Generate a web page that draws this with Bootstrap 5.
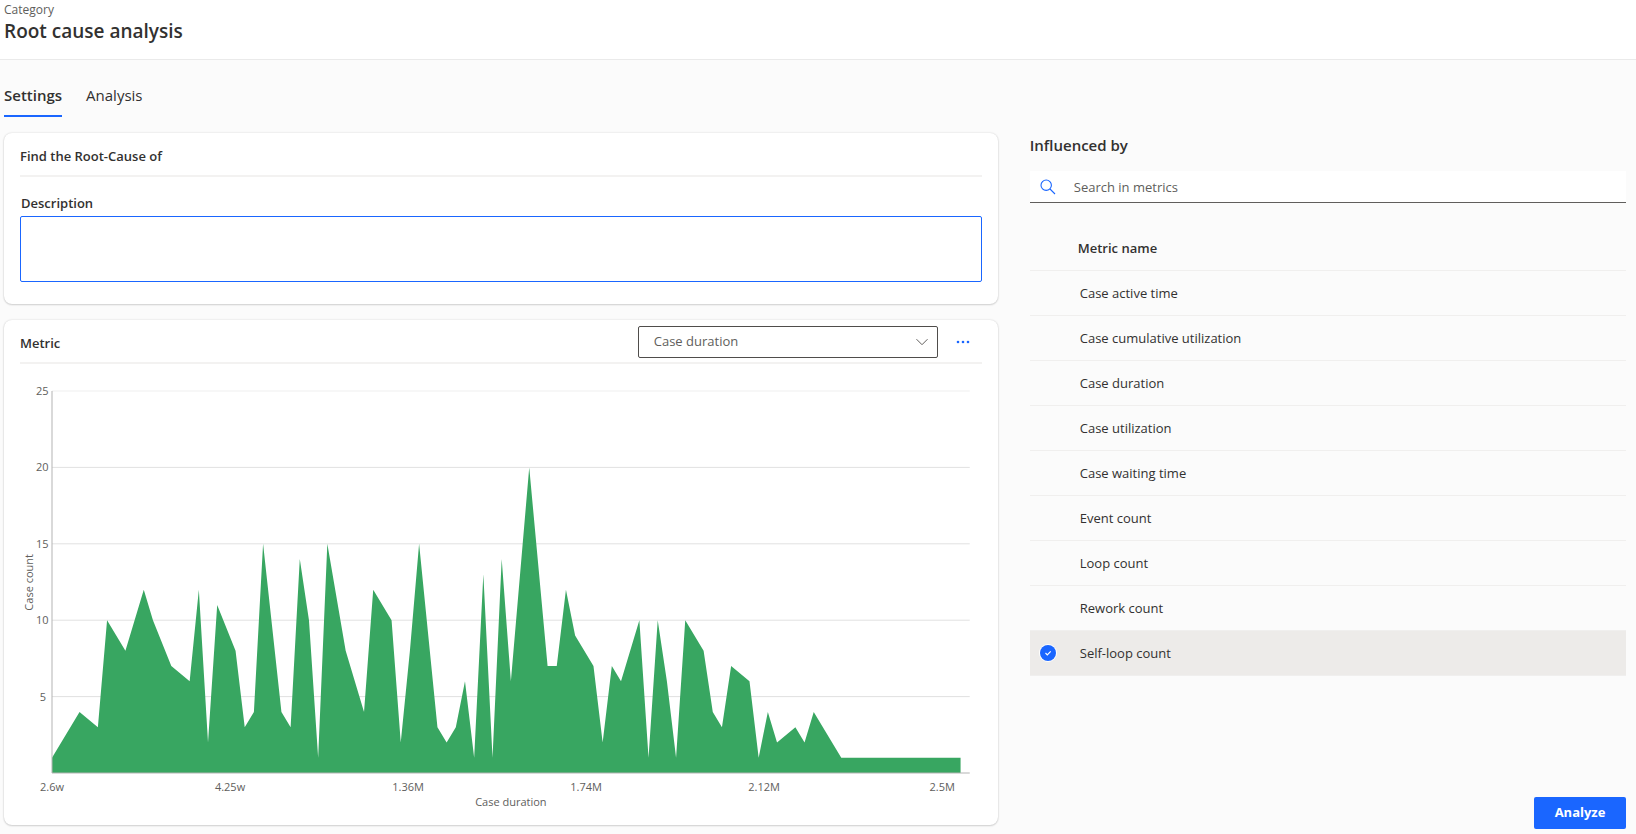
<!DOCTYPE html>
<html lang="en">
<head>
<meta charset="utf-8">
<meta name="viewport" content="width=device-width, initial-scale=1">
<title>Root cause analysis</title>
<link href="https://cdn.jsdelivr.net/npm/bootstrap@5.3.0/dist/css/bootstrap.min.css" rel="stylesheet">
<style>
  :root { --accent: #1a66ff; --ink: #323130; --muted-ink: #605e5c; --rule: #f3f2f1; }
  body { font-family: "Open Sans", "Noto Sans", sans-serif; font-size: 13px; line-height: 20px; color: var(--ink); background: #fbfbfb; }
  .page-head { height: 60px; padding: 2px 4px 0; border-bottom: 1px solid #eaeaea; }
  .page-head p { font-size: 12px; line-height: 16px; color: var(--muted-ink); }
  .page-head h1 { font-size: 19px; line-height: 26px; font-weight: 600; }
  .page-tabs { gap: 24px; padding: 21px 4px 0; }
  .page-tabs .nav-link { padding: 3px 0 9px; font-size: 15px; line-height: 22px; color: var(--ink); border-bottom: 2px solid transparent; }
  .page-tabs .nav-link.active { font-weight: 600; border-color: var(--accent); }
  .workspace { display: grid; grid-template-columns: minmax(0, 5fr) minmax(0, 3fr); column-gap: 32px; padding: 16px 10px 5px 4px; }
  .panel { background: #fff; border-radius: 8px; padding: 0 16px; box-shadow: 0 0 2px rgba(0,0,0,.16), 0 1px 2px rgba(0,0,0,.14); }
  .panel-head { height: 44px; padding-top: 2px; border-bottom: 2px solid var(--rule); }
  .panel-head h2 { padding-top: 2px; }
  .panel-body { padding: 12px 0 22px; }
  h2, label.caption { font-size: 13px; line-height: 20px; font-weight: 600; margin: 0; }
  label.caption { padding: 4px 0 3px 1px; }
  .side h2 { font-size: 15px; line-height: 24px; margin-bottom: 14px; }
  .description { height: 66px; border: 1px solid var(--accent); border-radius: 2px; resize: none; padding: 6px 8px; }
  .metric-select { width: 300px; height: 32px; padding: 0 40px 0 15px; font-size: 13px; color: var(--muted-ink); border: 1px solid #4f4d4b; border-radius: 2px;
    background: #fff url("data:image/svg+xml,%3Csvg xmlns='http://www.w3.org/2000/svg' viewBox='0 0 12 12'%3E%3Cpath d='M.5 3.2 6 8.7l5.5-5.5' fill='none' stroke='%23605e5c'/%3E%3C/svg%3E") no-repeat right 9px center / 12px 12px; }
  .more-btn { width: 16px; height: 16px; margin: 0 11px 0 17px; }
  .chart-box { display: grid; grid-template-columns: 16px 16px minmax(0, 1fr); padding: 27px 12px 12px 0; color: var(--muted-ink); font-size: 11px; line-height: 15px; }
  .y-title { writing-mode: vertical-rl; transform: rotate(180deg); justify-self: center; align-self: center; }
  .y-ticks { text-align: right; margin-right: 6px; }
  .y-ticks span { height: 0; line-height: 0; }
  .plot { height: 382px; }
  .x-ticks { grid-column: 3; width: 97%; padding-top: 6px; }
  .x-ticks span { width: 0; display: flex; justify-content: center; white-space: nowrap; }
  .x-title { grid-column: 3; text-align: center; }
  .search-box { height: 32px; background: #fff; border-bottom: 1px solid var(--muted-ink); padding-left: 10px; }
  .search-box input { font-size: 13px; padding: 0 0 0 18px; color: var(--ink); }
  .search-box input::placeholder { color: var(--muted-ink); opacity: 1; }
  .metric-table { margin-top: 22px; }
  .metric-table th, .metric-table td { padding: 0; vertical-align: middle; height: 45px; border-bottom: 1px solid #f0efee; }
  .metric-table th { font-weight: 600; padding-top: 2px; }
  .metric-table .pick { width: 48px; padding-left: 10px; }
  .metric-table .chosen td { background: #edebe9; }
  .metric-table label { display: block; padding-left: 2px; }
  .pick input { display: block; appearance: none; width: 16px; height: 16px; margin: 0; border-radius: 50%; }
  .pick input:checked { background: var(--accent) url("data:image/svg+xml,%3Csvg xmlns='http://www.w3.org/2000/svg' viewBox='0 0 16 16'%3E%3Cpath d='m5.5 8 1.8 1.8 3.4-3.5' fill='none' stroke='white' stroke-width='1.2'/%3E%3C/svg%3E"); box-shadow: 0 0 0 1px #fff; }
  .analyze-btn { width: 92px; height: 32px; padding: 0; background: var(--accent); color: #fff; font-size: 13px; font-weight: 700; border: 0; border-radius: 2px; }
  @media (max-width: 900px) { .workspace { grid-template-columns: minmax(0, 1fr); row-gap: 16px; } .metric-select { width: 200px; } }
</style>
</head>
<body class="d-flex flex-column min-vh-100">
<header class="page-head bg-white">
  <p class="m-0">Category</p>
  <h1 class="m-0">Root cause analysis</h1>
</header>
<nav class="nav page-tabs">
  <a class="nav-link active" href="#settings" aria-current="page">Settings</a>
  <a class="nav-link" href="#analysis">Analysis</a>
</nav>
<main class="workspace flex-grow-1" id="settings">
  <div class="d-flex flex-column gap-3 pb-1">
    <section class="panel">
      <div class="panel-head d-flex align-items-center"><h2>Find the Root-Cause of</h2></div>
      <div class="panel-body">
        <label class="caption d-block" for="desc">Description</label>
        <textarea class="description d-block w-100" id="desc"></textarea>
      </div>
    </section>
    <section class="panel flex-grow-1">
      <div class="panel-head d-flex align-items-center">
        <h2 class="me-auto">Metric</h2>
        <select class="form-select metric-select" aria-label="Metric"><option>Case duration</option></select>
        <button class="btn more-btn border-0 p-0 d-flex" type="button" aria-label="More options">
          <svg width="16" height="16" viewBox="0 0 16 16" fill="#1a66ff"><circle cx="3" cy="8" r="1.3"/><circle cx="8" cy="8" r="1.3"/><circle cx="13" cy="8" r="1.3"/></svg>
        </button>
      </div>
      <div class="chart-box">
        <div class="y-title">Case count</div>
        <div class="y-ticks d-flex flex-column justify-content-between"><span>25</span><span>20</span><span>15</span><span>10</span><span>5</span><span></span></div>
        <svg class="plot w-100 d-block overflow-visible" viewBox="0 0 100 25" preserveAspectRatio="none" role="img" aria-label="Case count by case duration">
          <g stroke="#e1e1e1" shape-rendering="crispEdges">
            <path stroke="#efefef" vector-effect="non-scaling-stroke" d="M0 0H100"/>
            <path vector-effect="non-scaling-stroke" d="M0 5H100M0 10H100M0 15H100M0 20H100"/>
          </g>
          <!-- x is the bucket number, y the case count measured up from the axis -->
          <polygon fill="#38a661" transform="matrix(1 0 0 -1 0 25)" points="0,0 0,1 3,4 5,3 6,10 8,8 10,12 11,10 13,7 15,6 16,12 17,2 18,11 20,8 21,3 22,4 23,15 25,4 26,3 27,14 28,10 29,1 30,15 32,8 34,4 35,12 37,10 38,2 39,8 40,15 42,3 43,2 44,3 45,6 46,1 47,13 48,1 49,14 50,6 52,20 54,7 55,7 56,12 57,9 59,7 60,2 61,7 62,6 64,10 65,1 66,10 67,6 68,1 69,10 71,8 72,4 73,3 74,7 76,6 77,1 78,4 79,2 81,3 82,2 83,4 86,1 99,1 99,0"/>
          <path d="M0 0V25H100" fill="none" stroke="#b3b3b3" vector-effect="non-scaling-stroke" shape-rendering="crispEdges"/>
        </svg>
        <div class="x-ticks d-flex justify-content-between"><span>2.6w</span><span>4.25w</span><span>1.36M</span><span>1.74M</span><span>2.12M</span><span>2.5M</span></div>
        <div class="x-title">Case duration</div>
      </div>
    </section>
  </div>
  <aside class="side d-flex flex-column">
    <h2>Influenced by</h2>
    <div class="search-box d-flex align-items-center">
      <svg width="16" height="16" viewBox="0 0 16 16" fill="none" stroke="#1a66ff" stroke-width="1.1"><circle cx="6.2" cy="6.2" r="5.2"/><path d="m10 10 5 5"/></svg>
      <input class="border-0 bg-transparent flex-grow-1" type="text" placeholder="Search in metrics" aria-label="Search in metrics">
    </div>
    <table class="metric-table w-100">
      <thead><tr><th class="pick"></th><th>Metric name</th></tr></thead>
      <tbody>
        <tr><td class="pick"><input type="checkbox" id="m1" aria-label="Case active time"></td><td><label for="m1">Case active time</label></td></tr>
        <tr><td class="pick"><input type="checkbox" id="m2" aria-label="Case cumulative utilization"></td><td><label for="m2">Case cumulative utilization</label></td></tr>
        <tr><td class="pick"><input type="checkbox" id="m3" aria-label="Case duration"></td><td><label for="m3">Case duration</label></td></tr>
        <tr><td class="pick"><input type="checkbox" id="m4" aria-label="Case utilization"></td><td><label for="m4">Case utilization</label></td></tr>
        <tr><td class="pick"><input type="checkbox" id="m5" aria-label="Case waiting time"></td><td><label for="m5">Case waiting time</label></td></tr>
        <tr><td class="pick"><input type="checkbox" id="m6" aria-label="Event count"></td><td><label for="m6">Event count</label></td></tr>
        <tr><td class="pick"><input type="checkbox" id="m7" aria-label="Loop count"></td><td><label for="m7">Loop count</label></td></tr>
        <tr><td class="pick"><input type="checkbox" id="m8" aria-label="Rework count"></td><td><label for="m8">Rework count</label></td></tr>
        <tr class="chosen"><td class="pick"><input type="checkbox" id="m9" aria-label="Self-loop count" checked></td><td><label for="m9">Self-loop count</label></td></tr>
      </tbody>
    </table>
    <button class="btn analyze-btn mt-auto ms-auto" type="button">Analyze</button>
  </aside>
</main>
<script src="https://cdn.jsdelivr.net/npm/bootstrap@5.3.0/dist/js/bootstrap.bundle.min.js"></script>
</body>
</html>
